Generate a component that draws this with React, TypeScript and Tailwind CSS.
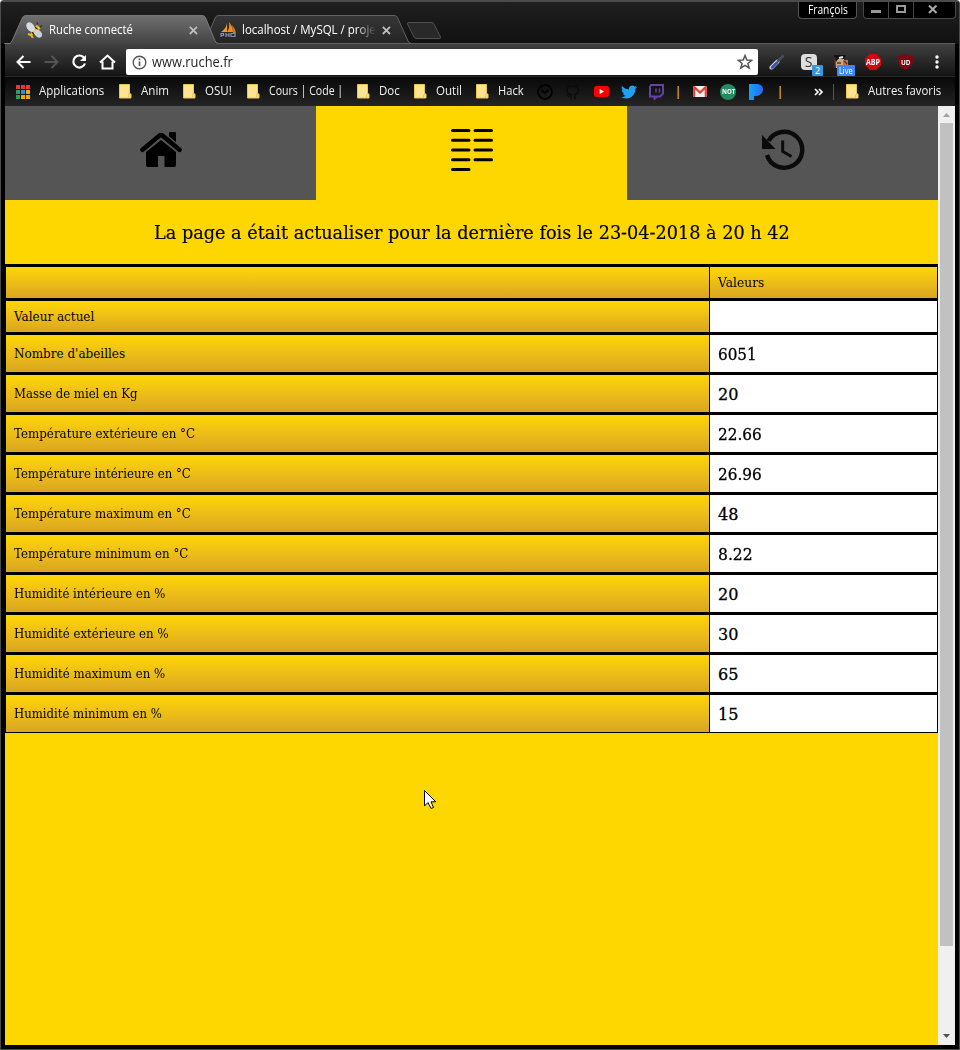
import { useLayoutEffect, useRef, useState } from 'react';
import type { ReactNode } from 'react';

/* Text condensed or widened horizontally to an exact width. */
function Fit({ w, className = '', children }: { w: number; className?: string; children: string }) {
  const ref = useRef<HTMLSpanElement>(null);
  const [scale, setScale] = useState(1);
  useLayoutEffect(() => {
    if (ref.current) setScale(w / ref.current.offsetWidth);
  }, [w, children]);
  return (
    <span className={`block shrink-0 ${className}`} style={{ width: w }}>
      <span ref={ref} className="inline-block origin-left whitespace-pre" style={{ transform: `scaleX(${scale})` }}>
        {children}
      </span>
    </span>
  );
}

const rows: [string, number, string, number][] = [
  ["Nombre d'abeilles", 111, '6051', 39],
  ['Masse de miel en Kg', 124, '20', 20],
  ['Température extérieure en °C', 181, '22.66', 44],
  ['Température intérieure en °C', 177, '26.96', 44],
  ['Température maximum en °C', 177, '48', 20],
  ['Température minimum en °C', 174, '8.22', 35],
  ['Humidité intérieure en %', 151, '20', 20],
  ['Humidité extérieure en %', 155, '30', 20],
  ['Humidité maximum en %', 151, '65', 20],
  ['Humidité minimum en %', 148, '15', 20],
];

function TabShapes() {
  return (
    <svg className="absolute left-0 top-0" width="955" height="46" viewBox="0 0 955 46">
      <defs>
        <linearGradient id="tabOn" x1="0" y1="0" x2="0" y2="1">
          <stop offset="0" stopColor="#707070" />
          <stop offset="1" stopColor="#424242" />
        </linearGradient>
        <linearGradient id="tabOff" x1="0" y1="0" x2="0" y2="1">
          <stop offset="0" stopColor="#363636" />
          <stop offset="1" stopColor="#242424" />
        </linearGradient>
      </defs>
      <path d="M4 43.5H955" stroke="#5c5c5c" />
      <path d="M210 30L215.500 17Q216.500 15.500 218.500 15.500H394.500Q396.500 15.500 397.500 17.500L408 41Q409 43 411 43.500H214Z" fill="url(#tabOff)" stroke="#626262" />
      <path d="M5 44.500L10 43.500Q11 43 12 41L22.500 17.500Q23.500 15.500 25.500 15.500H202.500Q204.500 15.500 205.500 17.500L215 41Q216.500 43.500 218.500 44.500Z" fill="url(#tabOn)" />
      <path d="M5 43.500H10Q11 43 12 41L22.500 17.500Q23.500 15.500 25.500 15.500H202.500Q204.500 15.500 205.500 17.500L215 41Q216 43 218 43.500" fill="none" stroke="#777" />
      <path d="M409 22.500H432Q433.500 22.500 434.500 25L440.500 37Q441 38.500 439 38.500H416Q414.500 38.500 413.500 36L407.500 24Q407 22.500 409 22.500Z" fill="#292929" stroke="#505050" />
    </svg>
  );
}

function Bee() {
  return (
    <svg width="16" height="16" viewBox="0 0 16 16">
      <path d="M6 7L11 3L14.500 6L10 12L4 14Z" fill="#f3bd1c" />
      <path d="M9 5L12 8M12 2.500L11 .5M14 5L16 3.500" stroke="#332d25" strokeWidth="1.300" />
      <path d="M6 10L8.500 13" stroke="#332d25" strokeWidth="1.500" />
      <path d="M2 12L5 13L7 16" stroke="#edba20" strokeWidth="2" fill="none" />
      <ellipse cx="4.500" cy="5" rx="3.700" ry="5.200" transform="rotate(-35 4.500 5)" fill="#d6dce2" />
      <ellipse cx="12" cy="11.500" rx="3.300" ry="4.700" transform="rotate(-45 12 11.500)" fill="#c9d0d7" />
    </svg>
  );
}

function Sail() {
  return (
    <svg width="17" height="16" viewBox="0 0 17 16">
      <path d="M7 1V10H1Q6 7 7 1Z" fill="#e99a31" />
      <path d="M9 0Q13 5 13 10H7Q10 6 9 0Z" fill="#f28b19" />
      <path d="M12 3Q15 6 16 11H13Z" fill="#cc791e" />
      <path d="M1 15V11.500H3.500V13.500H1M6 11V15M6 13H9M9 11V15M11 15V11.500H15V14.500H11" stroke="#8c8db8" strokeWidth="1.200" fill="none" />
    </svg>
  );
}

function Cross() {
  return (
    <svg width="9" height="9" viewBox="0 0 9 9">
      <path d="M.8 .8L8 8M8 .8L.8 8" stroke="#bdbdbd" strokeWidth="1.800" />
    </svg>
  );
}

function Folder() {
  return (
    <svg width="13" height="15" viewBox="0 0 13 15" className="shrink-0">
      <path d="M.5 .5H10.500V10H12V14H.5Z" fill="#ffe48f" stroke="#e9c64e" />
      <path d="M9.500 13.500V11L11 9.500" fill="none" stroke="#e9c64e" />
    </svg>
  );
}

function Mark({ slot, label, w, apps = false }: { slot: string; label: string; w: number; apps?: boolean }) {
  const colors = ['#e53935', '#e53935', '#e53935', '#2e9d58', '#2a8cf0', '#f5a800', '#2e9d58', '#f5a800', '#f5a800'];
  return (
    <div className={`flex shrink-0 items-center ${slot}`}>
      <div className={`shrink-0 ${apps ? 'w-[23px]' : 'w-[22px]'}`}>
        {apps ? (
          <div className="grid w-[14px] grid-cols-3 gap-px">
            {colors.map((c, i) => (
              <i key={i} className="size-1" style={{ background: c }} />
            ))}
          </div>
        ) : (
          <Folder />
        )}
      </div>
      <Fit w={w} className="-mt-0.5">{label}</Fit>
    </div>
  );
}

function Slot({ className = 'w-7', children }: { className?: string; children: ReactNode }) {
  return <div className={`flex shrink-0 items-center justify-center ${className}`}>{children}</div>;
}

function TabStrip() {
  return (
    <div className="relative h-11 bg-gradient-to-b from-[#202020] to-[#111]">
      <TabShapes />
      <div className="relative flex h-11 text-[12px] leading-4 text-white">
        <div className="flex w-[210px] items-center pl-[26px] pt-4">
          <Bee />
          <div className="ml-[7px] w-[140px]"><Fit w={84}>Ruche connecté</Fit></div>
          <Cross />
        </div>
        <div className="flex w-[200px] items-center pl-[10px] pt-4">
          <Sail />
          <div className="ml-[5px] w-[140px]">
            <div className="w-[136px] [mask-image:linear-gradient(to_right,black_114px,transparent_134px)]">
              <Fit w={134}>localhost / MySQL / proje</Fit>
            </div>
          </div>
          <Cross />
        </div>
        <div className="ml-auto mr-[3px] flex pt-[2px]">
          <div className="mr-[6px] flex h-[17px] w-[59px] items-center justify-center rounded-b-[4px] border border-t-0 border-[#555] bg-black">
            <Fit w={40} className="text-[12px] leading-4">François</Fit>
          </div>
          <div className="flex h-[17px] w-[93px] rounded-b-[4px] border border-t-0 border-[#484848] bg-black">
            <div className="flex w-[25px] justify-center border-r border-[#484848] pt-2"><i className="h-[3px] w-[10px] bg-[#999]" /></div>
            <div className="flex w-[25px] justify-center border-r border-[#484848] pt-[3px]"><i className="h-2 w-[10px] border-2 border-[#999]" /></div>
            <div className="flex flex-1 justify-center pt-[3px] pr-1">
              <svg width="10" height="9" viewBox="0 0 10 9"><path d="M1 .5L8.500 8M8.500 .5L1 8" stroke="#aaa" strokeWidth="2" /></svg>
            </div>
          </div>
        </div>
      </div>
    </div>
  );
}

function Toolbar() {
  return (
    <div className="flex h-8 items-center bg-gradient-to-b from-[#404040] to-[#151515] pt-1 pl-[4px] pr-[4px]">
      <Slot>
        <svg width="15" height="14" viewBox="0 0 15 14"><path d="M7.500 1L1.500 7L7.500 13M1.500 7H14.500" fill="none" stroke="white" strokeWidth="2" /></svg>
      </Slot>
      <Slot>
        <svg width="15" height="14" viewBox="0 0 15 14"><path d="M7.500 1L13.500 7L7.500 13M13.500 7H.5" fill="none" stroke="#535353" strokeWidth="2" /></svg>
      </Slot>
      <Slot>
        <svg width="16" height="16" viewBox="0 0 16 16"><path d="M13.200 4A6 6 0 1 0 14 9.500" fill="none" stroke="white" strokeWidth="2.200" /><path d="M15 1V7H9Z" fill="white" /></svg>
      </Slot>
      <Slot>
        <svg width="17" height="16" viewBox="0 0 17 16"><path d="M1 8.500L8.500 1.500L16 8.500M3.500 7.500V14.500H13.500V7.500" fill="none" stroke="white" strokeWidth="2" /></svg>
      </Slot>
      <div className="ml-[5px] flex h-[26px] w-[632px] shrink-0 items-center rounded-[2px] bg-white pl-[6px] pr-[5px] text-[#222]">
        <svg width="15" height="15" viewBox="0 0 15 15"><circle cx="7.500" cy="7.500" r="6.300" fill="none" stroke="#555" strokeWidth="1.400" /><path d="M7.500 6.500V11M7.500 3.500V5.200" stroke="#555" strokeWidth="1.700" /></svg>
        <Fit w={81} className="ml-[5px] text-[14px] leading-5">www.ruche.fr</Fit>
        <svg className="ml-auto" width="16" height="16" viewBox="0 0 16 16"><path d="M8 1.500L9.800 6L14.700 6.300L10.900 9.400L12.200 14L8 11.400L3.800 14L5.100 9.400L1.300 6.300L6.200 6Z" fill="none" stroke="#555" strokeWidth="1.500" /></svg>
      </div>
      <Slot className="ml-[3px] w-[31px]">
        <svg width="16" height="16" viewBox="0 0 16 16"><path d="M2.500 13.500L8.500 7.500" stroke="#d4d9e8" strokeWidth="4" strokeLinecap="round" /><path d="M3 13.500L8 8.500" stroke="#3551b0" strokeWidth="2.500" strokeLinecap="round" /><path d="M8.500 7.500L14.500 1.500" stroke="#47505a" strokeWidth="2.500" /></svg>
      </Slot>
      <Slot className="relative w-[33px]">
        <div className="flex size-4 items-center justify-center rounded-[4px] bg-[#dedede] text-[14px] leading-4 text-[#333]">S</div>
        <div className="absolute left-[20px] top-[11px] flex h-[11px] w-[11px] items-center justify-center rounded-[1px] bg-[#3d93d8] text-[9px] leading-none text-white">2</div>
      </Slot>
      <Slot className="relative w-[32px]">
        <svg width="16" height="16" viewBox="0 0 16 16"><path d="M1 2H11V14H3Z" fill="#d5a17d" /><path d="M1 1H13L11 5H5L3 8L1 5Z" fill="#111" /><path d="M10 6H15V12H10" fill="#b57652" /><path d="M2 3V14M4 9H8M11 7L14 10" stroke="#4b332b" strokeWidth="1.300" /><path d="M6 4L10 3" stroke="#eee" strokeWidth="2" /></svg>
        <div className="absolute left-[12px] top-[11px] flex h-[11px] w-[18px] items-center justify-center rounded-[1px] bg-[#4285f4] text-[9px] leading-none text-white"><Fit w={14}>Live</Fit></div>
      </Slot>
      <Slot className="w-[32px]">
        <div className="flex size-4 items-center justify-center bg-[#d1080c] text-[8px] font-bold text-white [clip-path:polygon(30%_0,70%_0,100%_30%,100%_70%,70%_100%,30%_100%,0_70%,0_30%)]"><Fit w={14}>ABP</Fit></div>
      </Slot>
      <Slot className="relative w-[32px]">
        <svg width="15" height="16" viewBox="0 0 15 16"><path d="M7.500 0Q11 2 15 2V8Q14 13 7.500 16Q1 13 0 8V2Q4 2 7.500 0Z" fill="#7e0713" /></svg>
        <span className="absolute text-[7px] font-bold leading-none text-white"><Fit w={9}>UD</Fit></span>
      </Slot>
      <Slot className="w-[32px]">
        <svg width="4" height="14" viewBox="0 0 4 14" fill="white"><circle cx="2" cy="2" r="1.700" /><circle cx="2" cy="7" r="1.700" /><circle cx="2" cy="12" r="1.700" /></svg>
      </Slot>
    </div>
  );
}

function Bookmarks() {
  return (
    <div className="flex h-[30px] items-center border-t border-[#292929] bg-gradient-to-b from-[#090909] to-[#242424] pl-[11px] text-[12px] leading-4 text-[#f1f1f1]">
      <Mark slot="w-[103px]" label="Applications" w={65} apps />
      <Mark slot="w-[64px]" label="Anim" w={28} />
      <Mark slot="w-[64px]" label="OSU!" w={27} />
      <Mark slot="w-[110px]" label="Cours | Code |" w={74} />
      <Mark slot="w-[57px]" label="Doc" w={21} />
      <Mark slot="w-[62px]" label="Outil" w={26} />
      <Mark slot="w-[55px]" label="Hack" w={26} />
      <Slot><svg width="16" height="16" viewBox="0 0 16 16" fill="none" stroke="#030303" strokeWidth="1.800"><circle cx="8" cy="8" r="7" /><path d="M4.500 6L8 9L11.500 6" /></svg></Slot>
      <Slot><svg width="16" height="16" viewBox="0 0 24 24" fill="none" stroke="#0b0b0b" strokeWidth="2"><path d="M9 23V18C4 19.500 4 16 2 15.500M15 23V18.500C15 17 15 16.500 14.300 16C18 15.500 20 14 20 9.500C20 8 19.500 6.500 18.600 5.500C19 4 19 3 18.500 2C17 2 15.500 3 14.500 3.700C12.500 3.200 10.500 3.200 8.500 3.700C7.500 3 6 2 4.700 2C4.300 3 4.300 4 4.700 5.500C3.700 6.500 3.300 8 3.300 9.500C3.300 14 5.500 15.500 9.500 16C9 16.500 9 17 9 18" /></svg></Slot>
      <Slot><svg width="15" height="11" viewBox="0 0 15 11"><rect width="15" height="11" rx="2.500" fill="red" /><path d="M5.700 3L10 5.500L5.700 8Z" fill="white" /></svg></Slot>
      <Slot><svg width="16" height="16" viewBox="0 0 24 24" fill="#1da1f2"><path d="M23.950 4.570a10 10 0 0 1-2.820.775 4.960 4.960 0 0 0 2.160-2.723c-.95.555-2 .96-3.120 1.185a4.920 4.920 0 0 0-8.390 4.480C7.690 8.100 4.070 6.130 1.640 3.160a4.820 4.820 0 0 0-.67 2.480c0 1.700.87 3.210 2.190 4.090a4.900 4.900 0 0 1-2.230-.62v.06a4.920 4.920 0 0 0 3.950 4.830 5 5 0 0 1-2.210.08 4.940 4.940 0 0 0 4.600 3.420A9.870 9.870 0 0 1 0 19.540a14 14 0 0 0 7.550 2.210c9.050 0 14-7.500 14-13.980 0-.21 0-.42-.02-.63a9.940 9.940 0 0 0 2.420-2.570" /></svg></Slot>
      <Slot className="w-7 pr-px"><svg width="15" height="16" viewBox="0 0 15 16"><path d="M2 1H14V9.500L11 12.500H8L5.500 15V12.500H1V3Z" fill="none" stroke="#6441a5" strokeWidth="2" /><path d="M7 4.500V8.500M10.500 4.500V8.500" stroke="#6441a5" strokeWidth="1.500" /></svg></Slot>
      <Slot className="w-[14px] text-[#ffe08b]">|</Slot>
      <Slot className="ml-[1px] w-7"><svg width="14" height="11" viewBox="0 0 14 11"><path d="M0 0H14V11H0Z" fill="#eee" /><path d="M1.200 11V1L7 6.500L12.800 1V11" fill="none" stroke="#db4437" strokeWidth="2.200" /></svg></Slot>
      <Slot><div className="flex size-4 items-center justify-center rounded-full bg-[#258b60] text-[7px] font-bold text-white"><Fit w={13}>NOT</Fit></div></Slot>
      <Slot className="w-[27px]"><svg width="14" height="16" viewBox="0 0 14 16"><defs><linearGradient id="pan"><stop stopColor="#13a5f8" /><stop offset="1" stopColor="#2868f0" /></linearGradient></defs><path d="M0 0H7C11.500 0 14 2 14 5.500S11 12 7 12H5V16H0Z" fill="url(#pan)" /></svg></Slot>
      <Slot className="w-[22px] text-[#ffe08b]">|</Slot>
      <Slot className="ml-[13px] mr-px w-[28px]"><svg width="9" height="8" viewBox="0 0 9 8"><path d="M1 1L4 4L1 7M5 1L8 4L5 7" fill="none" stroke="white" strokeWidth="1.700" /></svg></Slot>
      <i className="mr-[12px] h-4 w-px shrink-0 bg-[#555]" />
      <Mark slot="w-[100px]" label="Autres favoris" w={73} />
    </div>
  );
}

function Row({ tall = false, label, value, head = false, last = false }: { tall?: boolean; head?: boolean; last?: boolean; label?: ReactNode; value?: ReactNode }) {
  const grad = 'bg-gradient-to-b from-[#ffd700] to-[#daa520]';
  return (
    <div className={`flex border-x border-t-[3px] border-black ${last ? 'border-b' : ''}`}>
      <div className={`flex w-[704px] items-center border-r border-black pl-2 ${grad} ${tall ? 'h-[37px]' : 'h-[31px]'}`}>{label}</div>
      <div className={`flex flex-1 items-center pl-2 ${head ? grad : 'bg-white'}`}>{value}</div>
    </div>
  );
}

function Page() {
  return (
    <main className="relative w-[933px] bg-[#ffd700] font-['DejaVu_Serif',serif] text-black">
      <nav className="grid h-[94px] grid-cols-3">
        <div className="flex justify-center bg-[#555] pt-[26px]">
          <svg width="42" height="36" viewBox="0 0 42 36"><path d="M29 1Q29 0 30 0H35Q36 0 36 1V13L29 7ZM6 20L21 8L36 20V33Q36 35 34 35H24.500V24H18V35H8Q6 35 6 33Z" /><path d="M2 18L19.500 3.500Q21 2.300 22.500 3.500L40 18" fill="none" stroke="#555" strokeWidth="7" /><path d="M2.500 17.800L19 4Q21 2.300 23 4L39.500 17.800" fill="none" stroke="black" strokeWidth="4.600" strokeLinecap="round" /></svg>
        </div>
        <div className="flex justify-center pt-[22px]">
          <svg width="42" height="44" viewBox="0 0 42 44"><path d="M1.500 2.500H18M24 2.500H40.500M1.500 12.300H18M24 12.300H40.500M1.500 22H18M24 22H40.500M1.500 31.700H18M24 31.700H40.500M1.500 41.500H18" stroke="black" strokeWidth="3" strokeLinecap="round" /></svg>
        </div>
        <div className="flex justify-center bg-[#555] pt-[23px]">
          <svg width="44" height="42" viewBox="0 0 44 42"><path d="M7.500 12A18 18 0 1 1 6 26" fill="none" stroke="#0b0b0b" strokeWidth="4.400" /><path d="M1 6V20H14.500Z" fill="#0b0b0b" /><path d="M21.700 11.500V22.500L30.500 27.500" fill="none" stroke="#0b0b0b" strokeWidth="3" /></svg>
        </div>
      </nav>
      <h1 className="flex h-16 items-center justify-center text-[19px] leading-6 [-webkit-text-stroke:0.200px_black]">
        <Fit w={636}>La page a était actualiser pour la dernière fois le 23-04-2018 à 20 h 42</Fit>
      </h1>
      <section className="text-[12px] leading-4">
        <Row head value={<Fit w={46}>Valeurs</Fit>} />
        <Row label={<Fit w={80}>Valeur actuel</Fit>} />
        {rows.map(([label, lw, value, vw], i) => (
          <Row key={label} tall last={i === rows.length - 1} label={<Fit w={lw}>{label}</Fit>} value={<Fit w={vw} className="pt-0.5 text-[16px] leading-5 [-webkit-text-stroke:0.300px_black]">{value}</Fit>} />
        ))}
      </section>
      <svg className="absolute left-[419px] top-[684px]" width="13" height="20" viewBox="0 0 13 20"><path d="M.5 .5V16L4 12.500L7 18.500L9.500 17.500L7 11.800H11.800Z" fill="white" stroke="black" /></svg>
    </main>
  );
}

export default function App() {
  return (
    <div className="flex h-[1050px] w-[960px] flex-col overflow-hidden rounded-t-[4px] border border-t-2 border-[#4b4b4b] bg-black font-['Open_Sans','Noto_Sans',sans-serif]">
      <div className="-mt-[2px] -ml-px w-[959px] shrink-0 border-t-2 border-[#555]">
        <div className="-mt-[2px]"><TabStrip /></div>
      </div>
      <div className="ml-1 w-[950px]"><Toolbar /><Bookmarks /></div>
      <div className="ml-1 flex h-[939px] shrink-0">
        <Page />
        <aside className="flex w-[17px] flex-col items-center bg-[#f0f0f0]">
          <div className="flex h-[17px] items-center"><svg width="7" height="4" viewBox="0 0 7 4"><path d="M0 4L3.500 0L7 4Z" fill="#a3a3a3" /></svg></div>
          <div className="h-[823px] w-[13px] bg-[#c1c1c1]" />
          <div className="mt-auto flex h-[18px] items-center"><svg width="7" height="4" viewBox="0 0 7 4"><path d="M0 0L3.500 4L7 0Z" fill="#505050" /></svg></div>
        </aside>
      </div>
    </div>
  );
}
